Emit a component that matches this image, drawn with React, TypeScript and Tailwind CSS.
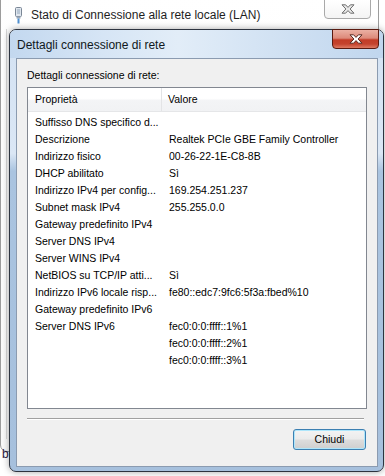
import React from "react";

const rows: [string, string][] = [
  ["Suffisso DNS specifico d...", ""],
  ["Descrizione", "Realtek PCIe GBE Family Controller"],
  ["Indirizzo fisico", "00-26-22-1E-C8-8B"],
  ["DHCP abilitato", "Sì"],
  ["Indirizzo IPv4 per config...", "169.254.251.237"],
  ["Subnet mask IPv4", "255.255.0.0"],
  ["Gateway predefinito IPv4", ""],
  ["Server DNS IPv4", ""],
  ["Server WINS IPv4", ""],
  ["NetBIOS su TCP/IP atti...", "Sì"],
  ["Indirizzo IPv6 locale risp...", "fe80::edc7:9fc6:5f3a:fbed%10"],
  ["Gateway predefinito IPv6", ""],
  ["Server DNS IPv6", "fec0:0:0:ffff::1%1"],
  ["", "fec0:0:0:ffff::2%1"],
  ["", "fec0:0:0:ffff::3%1"],
];

function CloseGlyph({ fill, stroke }: { fill: string; stroke: string }) {
  return (
    <svg width="14" height="10" viewBox="0 0 14 10">
      <path
        d="M1 0.8 H4.6 L7 3.4 L9.4 0.8 H13 L9.1 5 L13 9.2 H9.4 L7 6.6 L4.6 9.2 H1 L4.9 5 Z"
        fill={fill}
        stroke={stroke}
        strokeWidth="1"
        strokeLinejoin="round"
      />
    </svg>
  );
}

function PlugIcon() {
  return (
    <svg width="9" height="17" viewBox="0 0 9 17">
      <rect x="1.5" y="0.5" width="6" height="9" rx="1" fill="#dfe6ee" stroke="#7a8796" />
      <rect x="3" y="2" width="3" height="5" fill="#b9c6d4" />
      <rect x="2.5" y="9.5" width="4" height="2" fill="#9aa8b8" />
      <rect x="3.5" y="11.5" width="2" height="5" fill="#4f8fd0" />
    </svg>
  );
}

export default function App() {
  return (
    <div className="relative w-[385px] h-[476px] overflow-hidden bg-white font-['Liberation_Sans',Arial,sans-serif] text-black">
      {/* outer window (background) */}
      <div className="absolute left-0 top-[-12px] w-[379px] h-[464px] rounded-[7px] border border-[#9c9c9c] bg-[linear-gradient(180deg,#ffffff_0%,#f9f9f9_100%)]">
        <div className="flex items-center h-[40px] pt-[12px] pl-[13px] gap-[8px]">
          <PlugIcon />
          <span className="text-[12px] leading-none text-[#1e1e1e]">
            Stato di Connessione alla rete locale (LAN)
          </span>
        </div>
        <div className="absolute left-[5px] top-[40px] w-[1px] h-[410px] bg-[#d8d8d8]" />
      </div>
      <div className="absolute left-[324px] top-[-1px] w-[47px] h-[20px] rounded-b-[4px] border border-[#a9a9a9] bg-[linear-gradient(180deg,#ffffff_0%,#f4f4f4_100%)] flex items-center justify-center">
        <CloseGlyph fill="#e8e8e8" stroke="#6e6e6e" />
      </div>
      <span className="absolute left-[2px] top-[448px] text-[12px] leading-none text-[#2a1a40]">b</span>

      {/* details dialog */}
      <div className="absolute left-[9px] top-[29px] w-[375px] h-[443px] rounded-[7px] border border-[#2d3440] bg-[linear-gradient(180deg,#d3e2f3_0%,#dbe7f5_28%,#aac4e0_32%,#a6c0dd_100%)] shadow-[0_0_7px_rgba(0,0,0,0.35)] flex flex-col">
        <div className="h-[28px] rounded-t-[6px] flex items-center pl-[7px] pt-[1px] bg-[linear-gradient(90deg,#c3d8ef_0%,#d6e5f5_25%,#e2edf8_45%,#d2e2f3_70%,#c0d6ee_100%)]">
          <span className="text-[12px] leading-none text-[#101820]">Dettagli connessione di rete</span>
        </div>
        <div className="absolute left-[322px] top-[-1px] w-[47px] h-[20px] rounded-b-[4px] border border-[#5a1a10] bg-[linear-gradient(180deg,#ebb0a3_0%,#dd8a7a_45%,#c23c27_55%,#c4432e_78%,#de7a63_100%)] flex items-center justify-center">
          <CloseGlyph fill="#ffffff" stroke="#5a2a22" />
        </div>

        <div className="ml-[6px] mr-[5px] h-[409px] border border-[#8b9bb0] bg-[#f0f0f0] flex flex-col pl-[10px]">
          <div className="mt-[9px] h-[15px] text-[10.5px] leading-[15px]">Dettagli connessione di rete:</div>
          <div className="mt-[4px] w-[340px] h-[322px] border border-[#828790] bg-white flex flex-col">
            <div className="h-[24px] flex border-b border-[#e5e6e8] bg-[linear-gradient(180deg,#ffffff_0%,#ffffff_45%,#f3f4f6_55%,#f1f2f4_100%)] text-[10.5px]">
              <div className="w-[134px] pl-[7px] flex items-center border-r border-[#e3e4e6]">Proprietà</div>
              <div className="pl-[6px] flex items-center">Valore</div>
            </div>
            <div className="pt-[2px] flex flex-col">
              {rows.map(([k, v], i) => (
                <div key={i} className="h-[17px] flex items-center text-[10.5px] leading-[17px]">
                  <div className="w-[135px] shrink-0 pl-[7px] pr-[2px] whitespace-nowrap overflow-hidden">{k}</div>
                  <div className="pl-[6px] whitespace-nowrap">{v}</div>
                </div>
              ))}
            </div>
          </div>
          <div className="mt-[9px] w-[337px] h-[1px] bg-[#a0a0a0]" />
          <div className="w-[337px] h-[1px] bg-white" />
          <div className="mt-[9px] ml-[266px] w-[73px] h-[21px] rounded-[3px] border border-[#3c7fb1] shadow-[inset_0_0_0_1px_#aee6fb] bg-[linear-gradient(180deg,#f3f3f3_0%,#ebebeb_48%,#dddddd_52%,#cfcfcf_100%)] flex items-center justify-center text-[10.5px]">
            Chiudi
          </div>
        </div>
      </div>
    </div>
  );
}
